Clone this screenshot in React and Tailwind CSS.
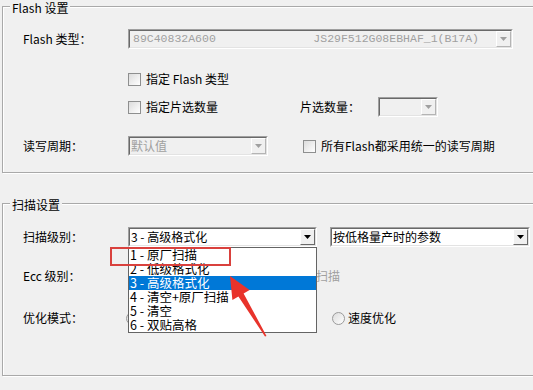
import clsx from 'clsx';

const scanLevels = [
    '1 - 原厂扫描',
    '2 - 低级格式化',
    '3 - 高级格式化',
    '4 - 清空+原厂扫描',
    '5 - 清空',
    '6 - 双贴高格',
];

function Group({ title, className, children }) {
    return (
        <div className={clsx("ml-[2px] w-[560px] border border-[#a9a9a9] shadow-[inset_1px_1px_0_#fff,1px_1px_0_#fff]", className)}>
            <div className="-mt-[7px] ml-[7px] w-fit px-[2px] h-[15px] leading-[15px] bg-[#f0f0f0]">{title}</div>
            {children}
        </div>
    );
}

function DropButton({ disabled }) {
    return (
        <div className={clsx(
            "w-[15px] h-full shrink-0 flex items-center justify-center bg-[#f0f0f0] border border-t-white border-l-white",
            disabled ? "border-b-[#b4b4b4] border-r-[#b4b4b4]" : "border-b-[#696969] border-r-[#696969]"
        )}>
            <svg width="7" height="4" viewBox="0 0 7 4">
                <polygon points="0,0 7,0 3.5,4" fill={disabled ? '#a0a0a0' : '#000'} />
            </svg>
        </div>
    );
}

function Combo({ className, disabled, children }) {
    return (
        <div className={clsx("h-[20px] flex border border-t-[#a0a0a0] border-l-[#a0a0a0] border-b-white border-r-white", className)}>
            <div className={clsx(
                "flex-1 flex min-w-0 border border-t-[#696969] border-l-[#696969] border-b-[#e3e3e3] border-r-[#e3e3e3]",
                disabled ? "bg-[#f0f0f0]" : "bg-white"
            )}>
                <div className={clsx("flex-1 min-w-0 flex items-center pl-[1px] leading-[16px] whitespace-nowrap", disabled ? "text-[#a0a0a0]" : "text-black")}>
                    {children}
                </div>
                <DropButton disabled={disabled} />
            </div>
        </div>
    );
}

function Check() {
    return <span className="w-[13px] h-[13px] shrink-0 border border-[#8e8f8f] bg-linear-to-br from-[#dcdcdc] to-white" />;
}

function Radio() {
    return <span className="w-[13px] h-[13px] shrink-0 rounded-full border border-[#9a9a9a] bg-linear-to-br from-[#dcdcdc] to-white" />;
}

export default function App() {
    return (
        <div className="relative w-[533px] h-[390px] overflow-hidden bg-[#f0f0f0] text-[12px] text-black font-['Noto_Sans_CJK_SC','Noto_Sans',sans-serif]">
            {/* Flash 设置 */}
            <Group title="Flash 设置" className="mt-[6px] h-[167px]">
                <div className="pl-[20px]">
                    <div className="mt-[14px] h-[20px] flex items-center">
                        <span className="w-[105px]">Flash 类型：</span>
                        <Combo disabled className="w-[385px]">
                            <div className="flex-1 flex justify-between pr-[17px] pl-[2px] font-['Liberation_Mono',monospace] text-[11.5px]">
                                <span>89C40832A600</span>
                                <span>JS29F512G08EBHAF_1(B17A)</span>
                            </div>
                        </Combo>
                    </div>

                    <div className="mt-[20px] h-[20px] flex items-center pl-[105px] gap-[5px]">
                        <Check />
                        <span>指定 Flash 类型</span>
                    </div>

                    <div className="mt-[8px] h-[20px] flex items-center pl-[105px]">
                        <div className="w-[172px] flex items-center gap-[5px]">
                            <Check />
                            <span>指定片选数量</span>
                        </div>
                        <span className="w-[78px]">片选数量：</span>
                        <Combo disabled className="w-[60px]" />
                    </div>

                    <div className="mt-[19px] h-[20px] flex items-center">
                        <span className="w-[105px]">读写周期：</span>
                        <Combo disabled className="w-[140px]">默认值</Combo>
                        <div className="ml-[35px] flex items-center gap-[5px]">
                            <Check />
                            <span>所有Flash都采用统一的读写周期</span>
                        </div>
                    </div>
                </div>
            </Group>

            {/* 扫描设置 */}
            <Group title="扫描设置" className="mt-[30px] h-[173px]">
                <div className="pl-[20px]">
                    <div className="mt-[15px] h-[20px] flex items-center">
                        <span className="w-[105px]">扫描级别：</span>
                        <div className="relative z-10">
                            <Combo className="w-[189px]">3 - 高级格式化</Combo>
                            {/* open list */}
                            <div className="absolute left-0 top-full w-[189px] border border-[#646464] bg-white">
                                {scanLevels.map((lv, i) => (
                                    <div
                                        key={lv}
                                        className={clsx(
                                            "h-[14px] leading-[14px] pl-[1px] text-[12.5px] whitespace-nowrap",
                                            i === 2 ? "bg-[#0078d7] text-white" : "text-black"
                                        )}
                                    >
                                        {lv}
                                    </div>
                                ))}
                            </div>
                        </div>
                        <Combo className="ml-[13px] w-[200px]">按低格量产时的参数</Combo>
                    </div>

                    <div className="mt-[19px] h-[20px] flex items-center">
                        <span className="w-[105px]">Ecc 级别：</span>
                        <span className="ml-[188px] text-[#a0a0a0]">扫描</span>
                    </div>

                    <div className="mt-[22px] h-[20px] flex items-center">
                        <span className="w-[103px]">优化模式：</span>
                        {/* first radio sits under the open list */}
                        <div className="w-[206px] flex items-center">
                            <Radio />
                        </div>
                        <div className="flex items-center gap-[3px]">
                            <Radio />
                            <span>速度优化</span>
                        </div>
                    </div>
                </div>
            </Group>

            {/* annotation: red box + arrow */}
            <div className="absolute left-[110px] top-[247px] w-[121px] h-[19px] border-2 border-[#d9413d] z-20" />
            <svg className="absolute left-[225px] top-[272px] z-20" width="48" height="70" viewBox="0 0 48 70">
                <polygon
                    points="5,4 24.6,17.9 18.6,21.5 41.5,64 40,64.5 13.4,24.5 7.4,28.1"
                    fill="#e8332b"
                />
            </svg>
        </div>
    );
}
